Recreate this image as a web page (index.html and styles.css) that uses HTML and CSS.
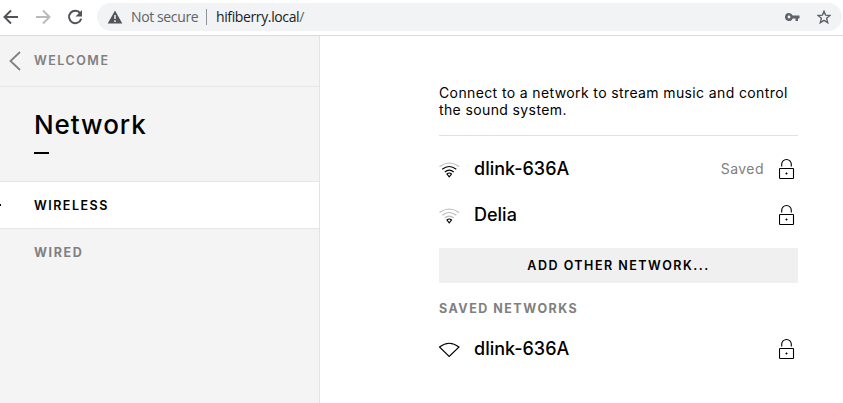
FILE: index.html
```html
<!DOCTYPE html>
<html lang="en">
<head>
<meta charset="utf-8">
<title>Network</title>
<link rel="stylesheet" href="styles.css">
</head>
<body>
<svg class="defs" width="0" height="0" aria-hidden="true">
  <symbol id="lock" viewBox="0 0 16 22">
    <path d="M2.700 8.500V6.300a4.800 4.800 0 0 1 9.600 0v2.200" />
    <rect x="0.500" y="10.500" width="14" height="10" rx="0.6" />
    <path d="M7.500 14.500v2M6.500 15.500h2" />
  </symbol>
</svg>
<header class="toolbar">
  <svg class="nav" viewBox="0 0 16 16"><path d="M15 8H2M8 1.500 1.500 8 8 14.500" /></svg>
  <svg class="nav forward" viewBox="0 0 16 16"><path d="M1 8h13M8 1.500 14.500 8 8 14.500" /></svg>
  <svg class="nav reload" viewBox="0 0 16 16"><path d="M13.300 4.300A6.200 6.200 0 1 0 14.200 9.700" /><path class="solid" d="M15 1v6.500H8.500z" /></svg>
  <div class="address">
    <svg class="warning" viewBox="0 0 16 14"><path d="M8 0.500 15.300 13.500H0.700z" /><path class="mark" d="M8 5v4M8 10.300v1.700" /></svg>
    <span class="insecure">Not secure</span>
    <span class="divider"></span>
    <span class="host">hifiberry.local<span class="slash">/</span></span>
    <svg class="key" viewBox="0 0 15 8"><path d="M4 0a4 4 0 1 0 3.700 5.400H10.500V8H13V5.400h1.500V2.600H7.700A4 4 0 0 0 4 0zM4 2.600a1.400 1.400 0 1 1 0 2.800 1.400 1.400 0 0 1 0-2.800z" /></svg>
    <svg class="star" viewBox="0 0 14 14"><path d="M7 1.200 8.600 5.200 13 5.500 9.600 8.300 10.700 12.700 7 10.300 3.300 12.700 4.400 8.300 1 5.500 5.400 5.200z" /></svg>
  </div>
</header>
<div class="layout">
  <nav class="sidebar">
    <a class="back"><svg viewBox="0 0 12 20"><path d="M11 1 1.500 10 11 19" /></svg><span>WELCOME</span></a>
    <div class="heading"><h1>Network</h1><div class="dash"></div></div>
    <a class="item active">WIRELESS</a>
    <a class="item wired">WIRED</a>
  </nav>
  <main class="content">
    <p class="intro"><span class="line">Connect to a network to stream music and control</span> <span class="line">the sound system.</span></p>
    <div class="network">
      <svg class="wifi" viewBox="0 0 22 16"><path class="weak" d="M1.500 4.500Q11.200-2.500 21 4.500" /><path d="M4.200 7.300Q11.200 1.800 18.300 7.300M6.800 10Q11.200 6.300 15.700 10" /><path d="M9 12Q11.200 10 13.500 12L11.200 14.800z" /></svg>
      <span class="name">dlink-636A</span><span class="status">Saved</span>
      <svg class="lock"><use href="#lock" /></svg>
    </div>
    <div class="network">
      <svg class="wifi" viewBox="0 0 22 16"><path class="weak" d="M1.500 4.500Q11.200-2.500 21 4.500M4.200 7.300Q11.200 1.800 18.300 7.300M6.800 10Q11.200 6.300 15.700 10" /><path d="M9 12Q11.200 10 13.500 12L11.200 14.800z" /></svg>
      <span class="name">Delia</span>
      <svg class="lock"><use href="#lock" /></svg>
    </div>
    <button class="add">ADD OTHER NETWORK...</button>
    <h2>SAVED NETWORKS</h2>
    <div class="network">
      <svg class="wifi" viewBox="0 0 22 16"><path d="M1.500 5Q11.200-2.500 21 5L11.200 14.500z" /></svg>
      <span class="name">dlink-636A</span>
      <svg class="lock"><use href="#lock" /></svg>
    </div>
  </main>
</div>
</body>
</html>
```
FILE: styles.css
```css
* { box-sizing: border-box; }
body {
  margin: 0;
  height: 403px;
  overflow: hidden;
  background: #fff;
  color: #000;
  font-family: Inter, "Liberation Sans", sans-serif;
}
svg { display: block; flex: none; fill: none; stroke: #000; }
.defs { position: absolute; }
.toolbar {
  display: flex;
  align-items: center;
  height: 36px;
  padding: 0 1px 2px 3px;
  border-bottom: 1px solid #d9dadc;
}
.nav { width: 16px; height: 16px; margin-right: 16px; stroke: #50545a; stroke-width: 2; }
.forward { stroke: #b8babd; }
.reload { margin-right: 14px; }
.solid { fill: #50545a; stroke: none; }
.address {
  display: flex;
  align-items: center;
  flex: 1;
  height: 28px;
  padding: 0 11px 0 10px;
  border-radius: 14px;
  background: #f1f3f4;
  font: 14px/20px "Open Sans", "Noto Sans", sans-serif;
}
.warning { width: 16px; height: 14px; margin-right: 8px; fill: #50545a; stroke: none; }
.mark { stroke: #f1f3f4; stroke-width: 1.5; }
.insecure { width: 67px; color: #5f6368; letter-spacing: -0.38px; white-space: nowrap; }
.divider { width: 1px; height: 16px; margin: 0 9px 0 8px; background: #8f9296; }
.host { flex: 1; color: #202124; letter-spacing: -0.38px; }
.slash { color: #5f6368; }
.key { width: 15px; height: 8px; margin-right: 17px; fill: #5f6368; stroke: none; }
.star { width: 14px; height: 14px; stroke: #5f6368; stroke-width: 1.4; }
.layout { display: flex; height: 367px; }
.sidebar { width: 320px; background: #f4f4f4; border-right: 1px solid #e3e3e3; }
.back {
  display: flex;
  align-items: center;
  height: 51px;
  padding: 0 0 1px 9px;
  border-bottom: 1px solid #e6e6e6;
  color: #808080;
  font-size: 12.5px;
  font-weight: 600;
  letter-spacing: 1.5px;
}
.back svg { width: 12px; height: 20px; margin-right: 13px; stroke: #808080; stroke-width: 1.8; }
.heading { height: 95px; padding: 21px 34px 0; border-bottom: 1px solid #e6e6e6; }
h1 { margin: 0; font-size: 26px; line-height: 34px; font-weight: 500; letter-spacing: 0.95px; }
.dash { width: 15px; height: 2px; margin-top: 10px; background: #000; }
.item {
  display: flex;
  align-items: center;
  height: 47px;
  padding-left: 34px;
  color: #808080;
  font-size: 12.5px;
  font-weight: 600;
  letter-spacing: 1.5px;
}
.active { position: relative; border-bottom: 1px solid #e6e6e6; background: #fff; color: #000; }
.active::before { content: ""; position: absolute; left: 0; top: 22px; width: 1px; height: 2px; background: #000; }
.wired { height: 46px; font-weight: 700; letter-spacing: 1.6px; }
.content { width: 359px; margin-left: 119px; padding-top: 48px; }
.intro {
  height: 52px;
  margin: 0 0 10px;
  border-bottom: 1px solid #e2e2e2;
  font-size: 14px;
  line-height: 17px;
}
.line { display: block; white-space: nowrap; letter-spacing: 0.38px; }
.network { display: flex; align-items: center; height: 46px; padding-right: 3px; }
.wifi { width: 22px; height: 16px; margin: 1px 14px 0 -1px; stroke-width: 1.1; }
.weak { stroke: #bbb; }
.name { flex: 1; padding-bottom: 1px; font-size: 18px; font-weight: 500; }
.status { margin-right: 15px; padding-bottom: 1px; color: #808080; font-size: 14px; letter-spacing: 0.45px; }
.lock { width: 16px; height: 22px; stroke-width: 1.1; }
.add {
  display: block;
  width: 359px;
  height: 35px;
  margin: 10px 0 17px;
  padding: 0;
  border: 0;
  background: #f0f0f0;
  color: #000;
  font: 600 12.5px/35px Inter, sans-serif;
  letter-spacing: 1.5px;
}
h2 { height: 18px; margin: 0 0 8px; color: #808080; font-size: 12.5px; line-height: 18px; font-weight: 700; letter-spacing: 1.5px; }
```
